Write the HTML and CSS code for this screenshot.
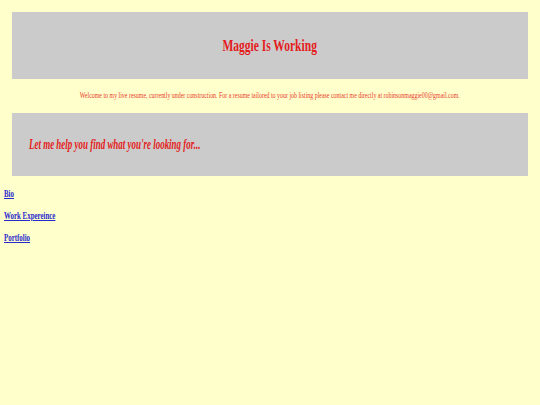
FILE: index.html
```html
<!DOCTYPE html>
<html lang="en">
<head>
<meta charset="utf-8">
<title>Maggie Is Working</title>
<link rel="stylesheet" href="styles.css">
</head>
<body>
  <header class="banner banner-top">
    <h1 class="title"><span class="narrow">Maggie Is Working</span></h1>
  </header>
  <p class="welcome"><span class="narrow narrow-welcome">Welcome to my live resume, currently under construction. For a resume tailored to your job listing please contact me directly at robinsonmaggie00@gmail.com.</span></p>
  <section class="banner banner-help">
    <h2 class="tagline"><span class="narrow narrow-left narrow-tagline">Let me help you find what you're looking for...</span></h2>
  </section>
  <nav class="links">
    <p class="link-row"><a href="#bio" class="narrow narrow-left narrow-link">Bio</a></p>
    <p class="link-row"><a href="#work" class="narrow narrow-left narrow-link">Work Expereince</a></p>
    <p class="link-row"><a href="#portfolio" class="narrow narrow-left narrow-link">Portfolio</a></p>
  </nav>
</body>
</html>
```

FILE: styles.css
```css
html, body {
  background: #ffffcc;
}
body {
  margin: 0;
  padding: 12px 4px 0 4px;
  font-family: "Liberation Serif", "Times New Roman", serif;
  color: #e41b1b;
}
.narrow {
  display: inline-block;
  white-space: nowrap;
  transform: scaleX(0.72);
  transform-origin: center;
}
.narrow-left {
  transform-origin: left center;
}
.narrow-welcome {
  transform: scaleX(0.74);
}
.narrow-tagline {
  transform: scaleX(0.64);
}
.narrow-link {
  transform: scaleX(0.69);
}
.banner {
  background: #cbcbcb;
  margin: 0 8px;
  display: flex;
  align-items: center;
}
.banner-top {
  height: 67px;
  justify-content: center;
}
.title {
  margin: 0;
  font-size: 16px;
  font-weight: bold;
  line-height: 1;
}
.welcome {
  margin: 0;
  height: 34px;
  line-height: 34px;
  font-size: 8px;
  text-align: center;
  color: #e83a2a;
}
.banner-help {
  height: 63px;
  padding-left: 17px;
}
.tagline {
  margin: 0;
  font-size: 14px;
  font-weight: bold;
  font-style: italic;
  line-height: 1;
}
.links {
  padding-top: 7px;
}
.link-row {
  margin: 0;
  height: 22px;
  line-height: 22px;
  font-size: 10px;
  font-weight: bold;
}
.link-row a {
  color: #2a2acc;
  text-decoration: underline;
}
```
